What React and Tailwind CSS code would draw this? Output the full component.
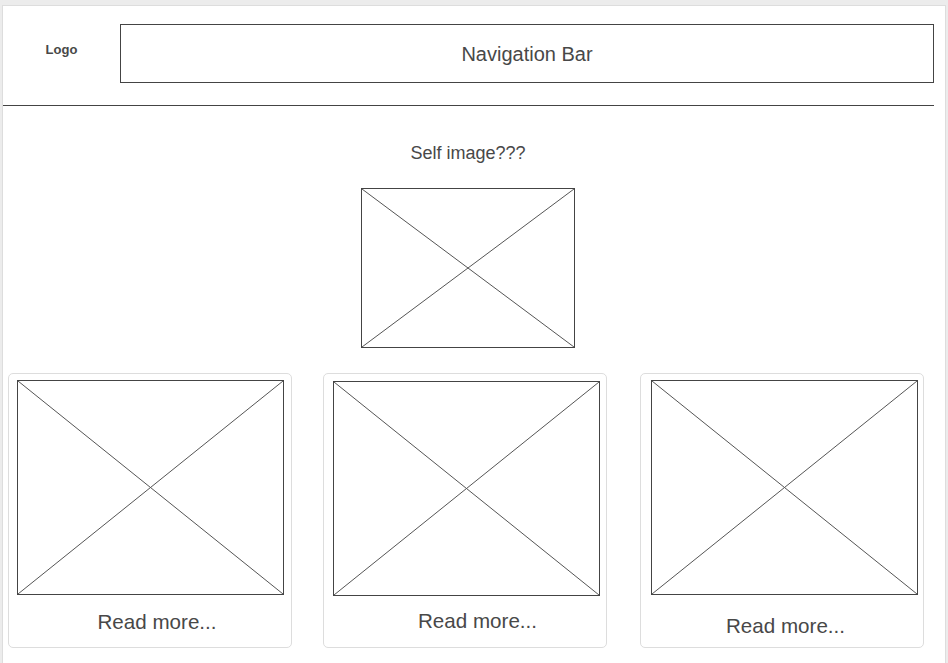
import React from "react";

function XBox({ className }) {
  return (
    <div className={"relative border border-[#444] bg-white " + className}>
      <svg className="block w-full h-full" preserveAspectRatio="none" viewBox="0 0 100 100">
        <line x1="0" y1="0" x2="100" y2="100" stroke="#555" strokeWidth="1" vectorEffect="non-scaling-stroke" />
        <line x1="100" y1="0" x2="0" y2="100" stroke="#555" strokeWidth="1" vectorEffect="non-scaling-stroke" />
      </svg>
    </div>
  );
}

function Card({ className, textClass }) {
  return (
    <div className={"w-[284px] h-[275px] border border-[#ddd] rounded-[5px] bg-white flex flex-col " + className}>
      <XBox className="w-[267px] h-[215px]" />
      <div className={"text-[20.6px] leading-[23px] text-[#484848] text-center w-[267px] " + textClass}>Read more...</div>
    </div>
  );
}

export default function App() {
  return (
    <div className="w-[948px] h-[663px] bg-[#ececec] overflow-hidden" style={{ fontFamily: '"Liberation Sans", Arial, sans-serif' }}>
      <div className="ml-[2px] mt-[5px] w-[944px] h-[700px] bg-white border border-[#ddd]">
        <div className="flex h-[99px]">
          <div className="w-[117px] pt-[36px] text-center text-[13px] leading-[15px] font-bold text-[#484848]">Logo</div>
          <div className="mt-[18px] w-[814px] h-[59px] border border-[#444] flex items-center justify-center text-[20px] text-[#484848]">
            Navigation Bar
          </div>
        </div>
        <div className="w-[931px] h-px bg-[#444]" />
        <div className="w-[930px] flex flex-col items-center">
          <div className="mt-[37px] text-[18px] leading-[20px] text-[#484848]">Self image???</div>
          <XBox className="mt-[25px] w-[214px] h-[160px]" />
        </div>
        <div className="flex mt-[25px] pl-[5px]">
          <Card className="pl-[8px] pt-[6px]" textClass="mt-[15px] pl-[13px]" />
          <Card className="ml-[31px] pl-[9px] pt-[7px]" textClass="mt-[13px] pl-[22px]" />
          <Card className="ml-[33px] pl-[10px] pt-[6px]" textClass="mt-[19px] pl-[2px]" />
        </div>
      </div>
    </div>
  );
}
